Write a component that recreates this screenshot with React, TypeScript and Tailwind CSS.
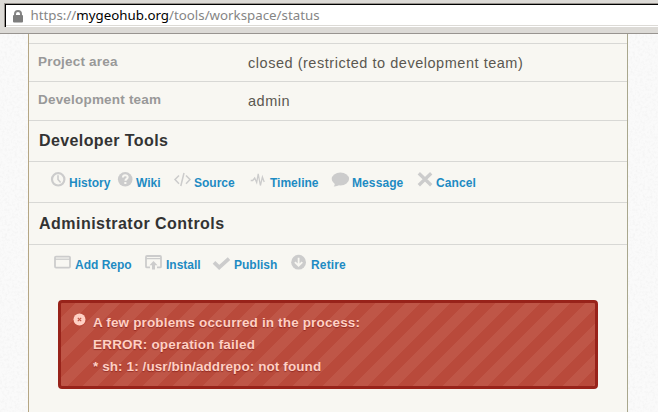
import React from "react";

const SANS = "font-['Liberation_Sans',Arial,sans-serif]";

function Grain() {
  return (
    <svg className="block h-full w-full" aria-hidden="true">
      <filter id="grain">
        <feTurbulence type="fractalNoise" baseFrequency="0.4" numOctaves="3" seed="4" />
        <feColorMatrix values="0 0 0 0 0.86  0 0 0 0 0.86  0 0 0 0 0.86  1.2 0 0 0 -0.5" />
      </filter>
      <rect width="100%" height="100%" filter="url(#grain)" />
    </svg>
  );
}

function AddressBar() {
  return (
    <header className="h-[34px] shrink-0 border-b border-[#989490] bg-[#dcdad6] pt-[3px] pl-1">
      <div className="h-6 border-t border-l border-[#96918c] bg-white">
        <div className="flex h-[23px] items-center border-t border-l border-t-black border-l-black bg-white shadow-[inset_0_-1px_0_#fff,inset_0_-2px_0_#dcdad6]">
          <svg className="ml-[7px] h-[13px] w-[10px] shrink-0" viewBox="0 0 10 13">
            <path d="M2 6V4a3 3 0 0 1 6 0v2" fill="none" stroke="#858585" strokeWidth="2" />
            <rect x="0" y="5" width="10" height="7.5" rx="1" fill="#7d7d7d" />
          </svg>
          <span className="-mt-[2px] ml-[7.5px] font-['Noto_Sans',sans-serif] text-[13.3px] leading-5 whitespace-nowrap text-[#858585]">
            https://<span className="text-black">mygeohub.org</span>/tools/workspace/status
          </span>
        </div>
      </div>
    </header>
  );
}

function Row({ label, value, className }: { label: string; value: string; className: string }) {
  return (
    <div className={`flex border-t border-[#d8d8d5] ${className}`}>
      <div className="w-[210px] pt-[9px] text-[13.5px] leading-[18px] font-bold tracking-[0.2px] text-[#999]">{label}</div>
      <div className="pt-[10px] text-[14.5px] leading-[18px] tracking-[0.53px] text-[#5b5850]">{value}</div>
    </div>
  );
}

function Tool({ label, icon, className }: { label: string; icon: React.ReactNode; className: string }) {
  return (
    <a className={`flex shrink-0 ${className}`}>
      {icon}
      <span className="pt-[6px] text-[12px] leading-[14px] font-bold whitespace-nowrap text-[#1e8bc3]">{label}</span>
    </a>
  );
}

const ICON = "mt-px h-[18px] w-5 shrink-0";

const HistoryIcon = (
  <svg className={ICON} viewBox="0 0 20 18" fill="none" stroke="#ccc">
    <circle cx="8.2" cy="8.3" r="6.2" strokeWidth="2.2" />
    <path d="M8 4.3v4.2l2.6 3" strokeWidth="1.6" />
  </svg>
);
const WikiIcon = (
  <svg className={ICON} viewBox="0 0 20 18">
    <circle cx="8.2" cy="8.3" r="7.3" fill="#ccc" />
    <path d="M5.9 6.6C5.9 3.4 10.7 3.6 10.7 6.3C10.7 7.8 8.4 8 8.4 9.8" fill="none" stroke="#f8f7f2" strokeWidth="2" />
    <rect x="7.3" y="11" width="2.1" height="2" fill="#f8f7f2" />
  </svg>
);
const SourceIcon = (
  <svg className={ICON} viewBox="0 0 20 18" fill="none" stroke="#ccc" strokeWidth="1.5">
    <path d="M6 4.5L2 8.6L6 12.8M13 4.5L17 8.6L13 12.8M11 2L7.8 15" />
  </svg>
);
const TimelineIcon = (
  <svg className={ICON} viewBox="0 0 20 18" fill="none" stroke="#ccc" strokeWidth="1.3">
    <path d="M.7 9.5h2l2-2.5l2 4.5L8.2 2.8L10.4 14.5L12.4 6L14.2 11" />
  </svg>
);
const MessageIcon = (
  <svg className={ICON} viewBox="0 0 20 18" fill="#ccc">
    <ellipse cx="9.4" cy="8" rx="8.7" ry="6.4" />
    <path d="M3.8 11C4 13 3.5 14.5 2.7 15.5C6 15.5 8 14.5 9 13Z" />
  </svg>
);
const CancelIcon = (
  <svg className={ICON} viewBox="0 0 20 18" fill="none" stroke="#ccc" strokeWidth="3.3">
    <path d="M1.8 2.3L14.2 14.3M14.2 2.3L1.8 14.3" />
  </svg>
);
const RepoIcon = (
  <svg className={ICON} viewBox="0 0 20 18" fill="none" stroke="#ccc">
    <rect x="1" y="2.6" width="15" height="11" rx="1" strokeWidth="1.8" />
    <path d="M1 5.2h15" strokeWidth="1.3" />
  </svg>
);
const InstallIcon = (
  <svg className={ICON} viewBox="0 0 20 18" fill="none" stroke="#ccc">
    <path d="M5 13.4H2Q1 13.4 1 12.4V3Q1 2 2 2H15Q16 2 16 3V12.4Q16 13.4 15 13.4H12" strokeWidth="1.8" />
    <path d="M1 4.6h15" strokeWidth="1.3" />
    <path d="M8.5 7L12.5 11.2H10V15.5H7V11.2H4.5Z" fill="#ccc" stroke="none" />
  </svg>
);
const PublishIcon = (
  <svg className={ICON} viewBox="0 0 20 18" fill="none" stroke="#ccc" strokeWidth="3.7">
    <path d="M2 8.4L7.2 13.4L17 4.7" />
  </svg>
);
const RetireIcon = (
  <svg className={ICON} viewBox="0 0 20 18">
    <circle cx="8.6" cy="8.2" r="7.4" fill="#ccc" />
    <path d="M8.6 3.7v8M4.9 8.1L8.6 11.7L12.3 8.1" fill="none" stroke="#f8f7f2" strokeWidth="1.8" />
  </svg>
);

function ErrorBox() {
  return (
    <div className="mt-[14px] ml-[29px] flex h-[89px] w-[540px] rounded-[4px] border-[3px] border-[#98231a] bg-[#b94a3b] bg-[linear-gradient(135deg,#b94a3b_25%,#bf5647_25%,#bf5647_50%,#b94a3b_50%,#b94a3b_75%,#bf5647_75%)] bg-[length:30px_30px] pt-[9px] text-[#ffd0c4]">
      <svg className="mt-px ml-[12px] h-[13px] w-[13px] shrink-0" viewBox="0 0 13 13">
        <circle cx="6.5" cy="6.5" r="6" fill="#ffd0c4" />
        <path d="M4.8 4.8l3.4 3.4M8.2 4.8L4.8 8.2" stroke="#c15748" strokeWidth="1.2" />
      </svg>
      <div className="ml-[7px] text-[13.5px] leading-[22px] font-bold [text-shadow:0_1px_1px_rgba(100,0,0,0.45)]">
        <p className="tracking-[0.15px]">A few problems occurred in the process:</p>
        <p className="tracking-[0.2px]">ERROR: operation failed</p>
        <p className="tracking-[0.09px]">* sh: 1: /usr/bin/addrepo: not found</p>
      </div>
    </div>
  );
}

export default function App() {
  return (
    <div className={`flex h-[412px] w-[658px] flex-col overflow-hidden bg-[#fafafa] ${SANS}`}>
      <AddressBar />
      <div className="flex min-h-0 flex-1">
        <div className="w-7 shrink-0"><Grain /></div>
        <main className="w-[600px] shrink-0 border-r border-l border-r-[#a9a78d] border-l-[#b5a684] bg-[#f8f7f2] pt-[9px]">
          <div className="[&>*]:pl-[9px]">
            <Row label="Project area" value="closed (restricted to development team)" className="h-[38px]" />
            <Row label="Development team" value="admin" className="h-[39px]" />
            <h2 className="h-[41px] border-t border-[#d8d8d5] pt-[10px] text-[16px] leading-5 font-bold tracking-[0.4px] text-[#333]"><span className="ml-px">Developer Tools</span></h2>
          </div>
          <nav className="flex h-[41px] border-t border-[#d8d8d5] pt-2">
            <Tool label="History" icon={HistoryIcon} className="ml-[21px] w-[67px] [&>span]:-ml-[1px]" />
            <Tool label="Wiki" icon={WikiIcon} className="w-[56px] [&>span]:-ml-[1px]" />
            <Tool label="Source" icon={SourceIcon} className="w-[77px] [&>span]:ml-px" />
            <Tool label="Timeline" icon={TimelineIcon} className="w-[81px]" />
            <Tool label="Message" icon={MessageIcon} className="w-[86px] [&>span]:ml-px [&>span]:tracking-[0.1px]" />
            <Tool label="Cancel" icon={CancelIcon} className="[&>span]:-ml-[1px] [&>span]:tracking-[0.1px]" />
          </nav>
          <h2 className="h-[42px] border-t border-[#d8d8d5] pt-[11px] pl-[10px] text-[16px] leading-5 font-bold tracking-[0.48px] text-[#333]">Administrator Controls</h2>
          <nav className="flex h-[42px] border-t border-[#d8d8d5] pt-2 [&_span]:pt-[5px]">
            <Tool label="Add Repo" icon={RepoIcon} className="ml-[25px] w-[91px] [&>span]:ml-px" />
            <Tool label="Install" icon={InstallIcon} className="w-[67px] [&>span]:ml-px" />
            <Tool label="Publish" icon={PublishIcon} className="w-[78px] [&>span]:ml-[2px]" />
            <Tool label="Retire" icon={RetireIcon} className="[&>span]:ml-px [&>span]:tracking-[0.15px]" />
          </nav>
          <ErrorBox />
        </main>
        <div className="flex-1"><Grain /></div>
      </div>
    </div>
  );
}
